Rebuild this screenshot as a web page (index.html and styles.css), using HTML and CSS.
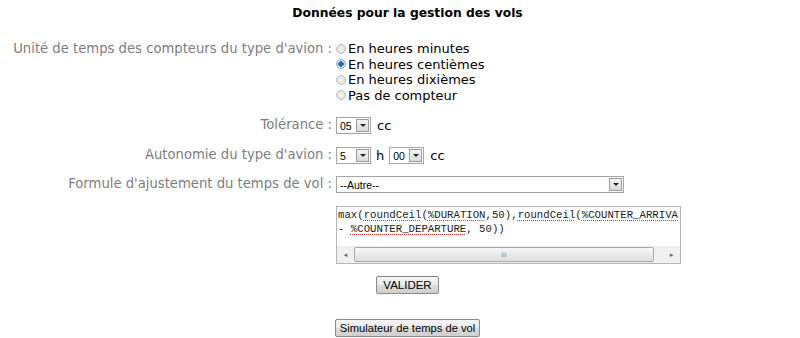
FILE: index.html
```html
<!DOCTYPE html>
<html>
<head>
<meta charset="utf-8">
<link rel="stylesheet" href="styles.css">
</head>
<body>
<div class="page">
  <h1 class="title">Données pour la gestion des vols</h1>
  <div class="form">
    <div class="label lbl-radio">Unité de temps des compteurs du type d'avion :</div>
    <div class="radios">
      <div class="radio-row"><span class="radio"></span>En heures minutes</div>
      <div class="radio-row"><span class="radio checked"></span>En heures centièmes</div>
      <div class="radio-row"><span class="radio"></span>En heures dixièmes</div>
      <div class="radio-row"><span class="radio"></span>Pas de compteur</div>
    </div>

    <div class="label lbl-tol">Tolérance :</div>
    <div class="value row-tol">
      <span class="sel sel-small"><span class="sel-text">05</span><span class="arrow"></span></span>
      <span class="unit">cc</span>
    </div>

    <div class="label lbl-auto">Autonomie du type d'avion :</div>
    <div class="value row-auto">
      <span class="sel sel-small"><span class="sel-text">5</span><span class="arrow"></span></span>
      <span class="unit unit-h">h</span>
      <span class="sel sel-small"><span class="sel-text">00</span><span class="arrow"></span></span>
      <span class="unit">cc</span>
    </div>

    <div class="label lbl-form">Formule d'ajustement du temps de vol :</div>
    <div class="value row-form">
      <span class="sel sel-wide"><span class="sel-text">--Autre--</span><span class="arrow"></span></span>
    </div>

    <div class="label"></div>
    <div class="value">
      <div class="textarea">
        <div class="ta-text">max(<span class="sp">roundCeil</span>(<span class="sp">%DURATION</span>,50),<span class="sp">roundCeil</span>(<span class="sp">%COUNTER_ARRIVA</span><br>- <span class="sp">%COUNTER_DEPARTURE</span>, 50))</div>
        <div class="hscroll">
          <span class="sb-btn">&#9666;</span>
          <span class="sb-track"><span class="sb-thumb"><span class="grip">III</span></span></span>
          <span class="sb-btn">&#9656;</span>
        </div>
      </div>
    </div>
  </div>
  <div class="btn-row valider-row"><span class="btn btn-valider">VALIDER</span></div>
  <div class="btn-row sim-row"><span class="btn btn-sim">Simulateur de temps de vol</span></div>
</div>
</body>
</html>
```

FILE: styles.css
```css
html, body {
  margin: 0;
  padding: 0;
  background: #fff;
}
.page {
  padding-left: 9px;
  font-family: "DejaVu Sans", Verdana, sans-serif;
  font-size: 13px;
  color: #000;
}
.title {
  margin: 0;
  padding-top: 6px;
  padding-left: 6px;
  height: 35px;
  text-align: center;
  font-size: 12.3px;
  font-weight: bold;
  line-height: 15px;
}
.form {
  display: grid;
  grid-template-columns: 326px auto;
  column-gap: 1px;
  align-items: start;
}
.label {
  text-align: right;
  color: #7d7d7d;
  font-size: 13.2px;
  line-height: 15px;
  white-space: nowrap;
  padding-right: 3px;
}
.radios {
  display: flex;
  flex-direction: column;
  align-items: flex-start;
}
.radio-row {
  display: flex;
  align-items: center;
  height: 15.5px;
  line-height: 15px;
  white-space: nowrap;
}
.radio {
  display: inline-block;
  width: 10px;
  height: 10px;
  border-radius: 50%;
  border: 1px solid #bcbcbc;
  background: radial-gradient(circle, #f6f6f6 0%, #dadada 100%);
  margin-right: 2px;
  box-sizing: border-box;
}
.radio.checked {
  background: radial-gradient(circle, #2d6fa8 0 2.5px, #dde6ee 3px);
  border-color: #8fa9c2;
}
.lbl-tol, .row-tol { margin-top: 14px; }
.lbl-auto, .row-auto { margin-top: 13px; }
.lbl-form, .row-form { margin-top: 12px; }
.value { display: flex; align-items: center; }
.sel {
  display: inline-flex;
  align-items: center;
  height: 17px;
  box-sizing: border-box;
  border: 1px solid #a5a5a5;
  background: #fff;
  font-family: "Liberation Sans", Arial, sans-serif;
  font-size: 10.5px;
  padding-left: 3px;
  padding-right: 1px;
}
.sel-small { width: 35px; }
.sel-wide { width: 288px; }
.sel-text { flex: 1; }
.arrow {
  width: 13px;
  height: 13px;
  box-sizing: border-box;
  border: 1px solid #9a9a9a;
  background: linear-gradient(#f4f4f4, #dadada);
  position: relative;
}
.arrow::after {
  content: "";
  position: absolute;
  left: 3px;
  top: 4px;
  border-left: 3px solid transparent;
  border-right: 3px solid transparent;
  border-top: 3px solid #222;
}
.unit {
  margin: 0 5px 0 6px;
  font-size: 13px;
  line-height: 15px;
}
.unit-h { margin: 0 5px 0 5px; }
.textarea {
  margin-top: 13px;
  width: 345px;
  height: 58px;
  box-sizing: border-box;
  border: 1px solid #b5b5b5;
  position: relative;
  overflow: hidden;
}
.ta-text {
  font-family: "Liberation Mono", "Courier New", monospace;
  font-size: 10.7px;
  line-height: 13.5px;
  padding: 2px 0 0 1px;
  white-space: nowrap;
  color: #222;
  height: 38px;
}
.sp {
  text-decoration: underline dotted #d33;
  text-underline-offset: 2px;
}
.hscroll {
  position: absolute;
  left: 0;
  right: 0;
  bottom: 0;
  height: 17px;
  display: flex;
  align-items: center;
  background: #f0f0f0;
}
.sb-btn {
  width: 17px;
  text-align: center;
  font-size: 7px;
  color: #666;
}
.sb-track {
  flex: 1;
  height: 15px;
  display: flex;
}
.sb-thumb {
  width: 300px;
  height: 15px;
  box-sizing: border-box;
  border: 1px solid #a8a8a8;
  border-radius: 2px;
  background: linear-gradient(#f6f6f6, #dedede);
  display: flex;
  align-items: center;
  justify-content: center;
}
.grip {
  font-size: 6px;
  color: #777;
}
.btn-row { text-align: center; padding-left: 6px; }
.valider-row { margin-top: 12px; }
.sim-row { margin-top: 25px; }
.btn {
  display: inline-block;
  height: 18px;
  box-sizing: border-box;
  border: 1px solid #8a8a8a;
  border-radius: 2px;
  background: linear-gradient(#f3f3f3 0%, #ebebeb 50%, #dcdcdc 51%, #cfcfcf 100%);
  font-family: "Liberation Sans", Arial, sans-serif;
  font-size: 11.5px;
  line-height: 16px;
  padding: 0 5px;
  color: #000;
}
.btn-valider { padding: 0 6px; }
.btn-sim { font-size: 11.2px; padding: 0 4px; }
```
